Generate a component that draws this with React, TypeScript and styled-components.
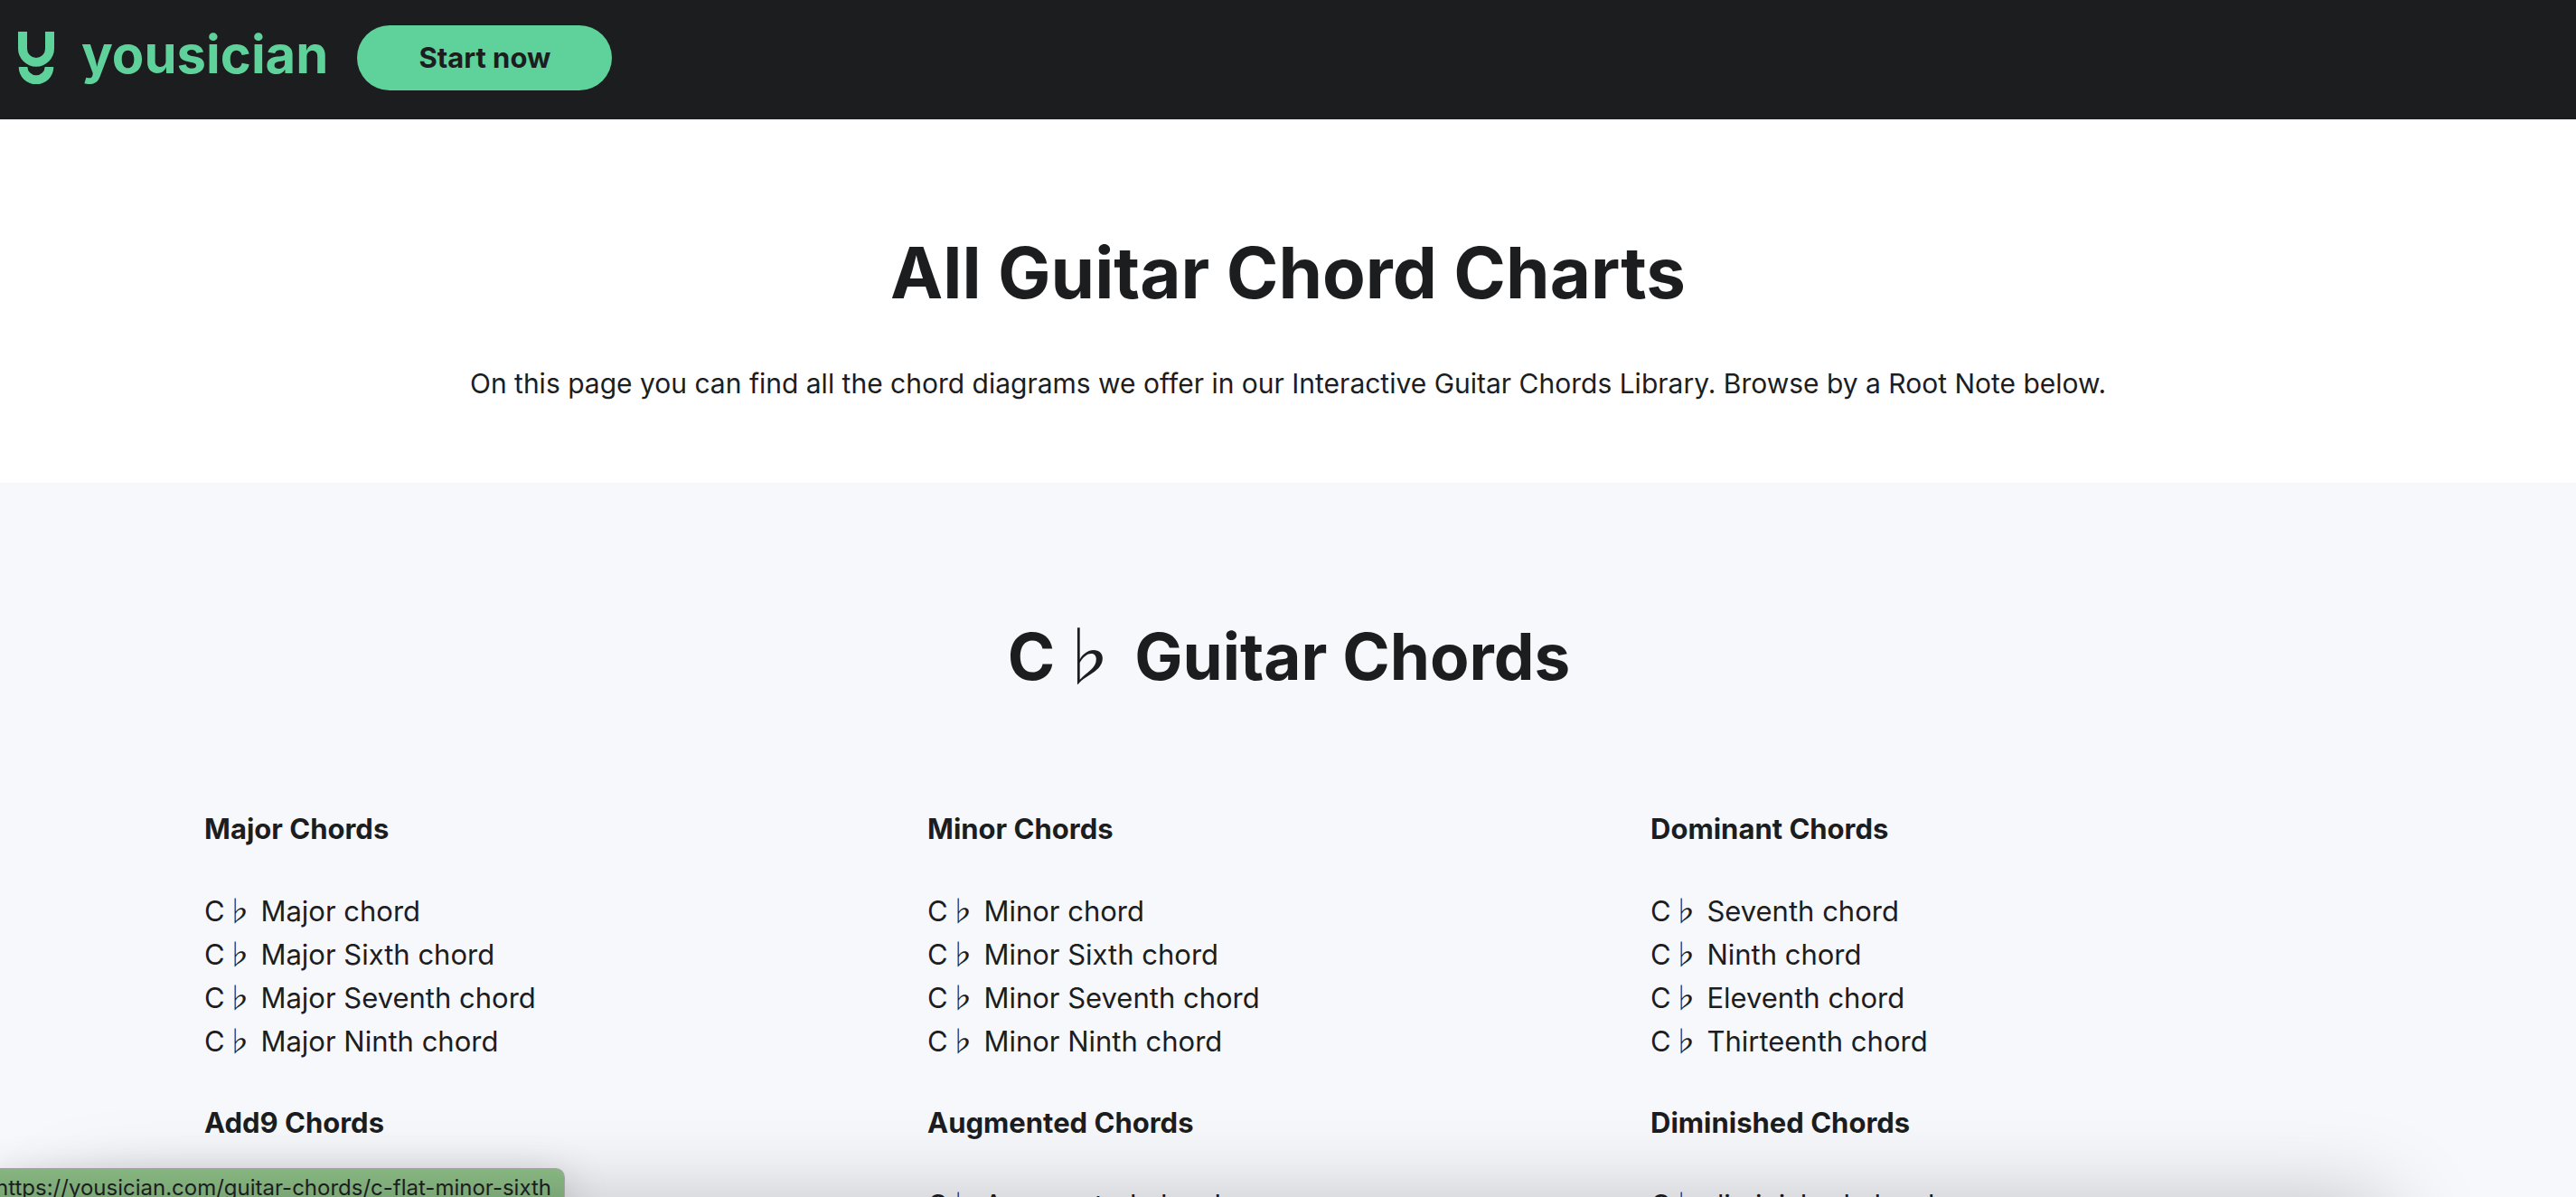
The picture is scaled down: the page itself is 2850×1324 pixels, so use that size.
import React from 'react';
import styled, { createGlobalStyle } from 'styled-components';

const Global = createGlobalStyle`
  *, *::before, *::after { box-sizing: border-box; }
  html, body, #root { height: 100%; }
  body {
    margin: 0;
    overflow: hidden;
    background: #f7f8fc;
    color: #1c1d1f;
    font-family: Inter, "Liberation Sans", Arial, sans-serif;
    font-size: 31px;
    line-height: 48px;
  }
`;

const Page = styled.div`
  position: relative;
  height: 100%;
  overflow: hidden;
`;

const Header = styled.header`
  display: flex;
  align-items: flex-start;
  gap: 32px;
  padding: 28px 20px 32px;
  background: #1c1d1f;
`;

const Brand = styled.a`
  display: flex;
  align-items: center;
  gap: 30px;
  height: 72px;
  color: #5fd19b;
  text-decoration: none;
`;

const Mark = styled.svg`
  width: 40px;
  height: 58px;
  fill: currentColor;
`;

const Wordmark = styled.span`
  padding-bottom: 8px;
  font-size: 58px;
  font-weight: 700;
  line-height: 64px;
`;

const StartButton = styled.button`
  height: 72px;
  padding: 0 68px;
  border: 0;
  border-radius: 36px;
  background: #5fd19b;
  color: #1c1d1f;
  font: inherit;
  font-weight: 700;
`;

const Intro = styled.section`
  padding: 118px 32px 86px;
  background: #fff;
  text-align: center;
`;

const Title = styled.h1`
  margin: 0 0 46px;
  font-size: 78px;
  font-weight: 700;
  line-height: 104px;
`;

const Lead = styled.p`
  margin: 0;
  font-size: 30px;
`;

const Chords = styled.section`
  padding: 144px 224px 0 226px;
`;

const RootNote = styled.h2`
  margin: 0 0 119px;
  font-size: 71px;
  font-weight: 700;
  line-height: 96px;
  text-align: center;
`;

const Groups = styled.div`
  display: grid;
  grid-template-columns: repeat(3, 1fr);
  row-gap: 42px;
`;

const GroupTitle = styled.h3`
  margin: 0 0 43px;
  font-size: 31px;
  font-weight: 700;
  line-height: 48px;
`;

const List = styled.ul`
  margin: 0;
  padding: 0;
  list-style: none;
`;

const ChordLink = styled.a`
  color: inherit;
  text-decoration: none;
`;

const FlatSign = styled.span`
  font-family: "Noto Sans CJK JP", sans-serif;
  font-weight: 400;
  line-height: 1;
`;

const WindowShadow = styled.div`
  position: absolute;
  top: 100%;
  left: 80px;
  right: 210px;
  height: 200px;
  margin-top: 8px;
  box-shadow: 0 0 100px rgba(0, 0, 0, 0.25);
`;

const StatusBar = styled.output`
  position: absolute;
  left: -5px;
  bottom: 0;
  height: 32px;
  padding-right: 14px;
  border-top: 1px solid #a2a3a3;
  border-right: 1px solid #a2a3a3;
  border-radius: 0 10px 0 0;
  background: linear-gradient(#86b680, #7ba676);
  box-shadow: 0 16px 50px rgba(0, 0, 0, 0.3);
  font-size: 24px;
  line-height: 42px;
  white-space: nowrap;
`;

interface ChordGroup {
  title: string;
  chords: string[];
}

const groups: ChordGroup[] = [
  { title: 'Major Chords', chords: ['Major chord', 'Major Sixth chord', 'Major Seventh chord', 'Major Ninth chord'] },
  { title: 'Minor Chords', chords: ['Minor chord', 'Minor Sixth chord', 'Minor Seventh chord', 'Minor Ninth chord'] },
  { title: 'Dominant Chords', chords: ['Seventh chord', 'Ninth chord', 'Eleventh chord', 'Thirteenth chord'] },
  { title: 'Add9 Chords', chords: [] },
  { title: 'Augmented Chords', chords: ['Augmented chord'] },
  { title: 'Diminished Chords', chords: ['diminished chord'] },
];

const CFlat = () => (
  <>
    C<FlatSign>♭</FlatSign>
  </>
);

export default function App() {
  return (
    <Page>
      <Global />
      <Header>
        <Brand href="#">
          <Mark viewBox="0 0 40 58" aria-hidden="true">
            <path d="M0 0H10V19a10 10 0 0 0 20 0V0H40V18.700a20 20 0 0 1-40 0Z" />
            <path d="M.7 39H10.400a9.600 9.300 0 0 0 19.200 0H39.300a19.300 19.300 0 0 1-38.600 0Z" />
          </Mark>
          <Wordmark>yousician</Wordmark>
        </Brand>
        <StartButton type="button">Start now</StartButton>
      </Header>
      <main>
        <Intro>
          <Title>All Guitar Chord Charts</Title>
          <Lead>
            On this page you can find all the chord diagrams we offer in our Interactive Guitar Chords Library. Browse by a Root Note below.
          </Lead>
        </Intro>
        <Chords>
          <RootNote>
            <CFlat /> Guitar Chords
          </RootNote>
          <Groups>
            {groups.map((group) => (
              <section key={group.title}>
                <GroupTitle>{group.title}</GroupTitle>
                <List>
                  {group.chords.map((chord) => (
                    <li key={chord}>
                      <ChordLink href="#">
                        <CFlat /> {chord}
                      </ChordLink>
                    </li>
                  ))}
                </List>
              </section>
            ))}
          </Groups>
        </Chords>
      </main>
      <WindowShadow />
      <StatusBar>https://yousician.com/guitar-chords/c-flat-minor-sixth</StatusBar>
    </Page>
  );
}
